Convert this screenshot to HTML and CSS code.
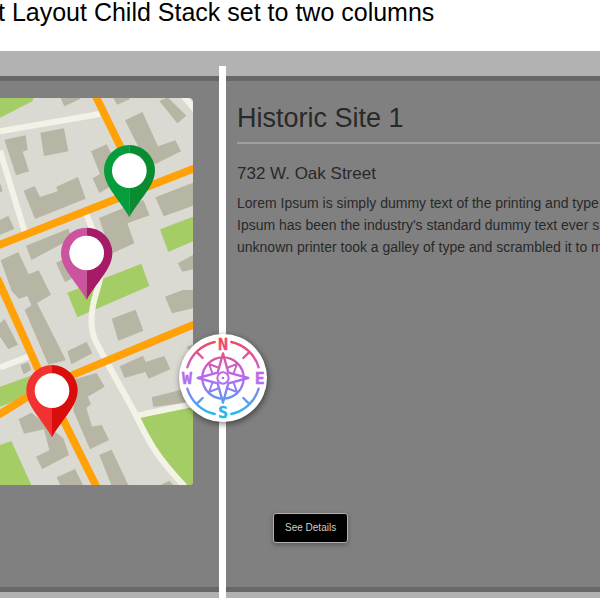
FILE: index.html
```html
<!DOCTYPE html>
<html lang="en">
<head>
<meta charset="utf-8">
<meta name="viewport" content="width=device-width, initial-scale=1">
<title>Layout Child Stack</title>
<link rel="stylesheet" href="styles.css">
</head>
<body>
<header class="page-header">
  <h1 class="page-title">t Layout Child Stack set to two columns</h1>
</header>
<main class="stage">
  <div class="stack">
    <div class="map-column">
      <svg class="map" viewBox="0 24 579 1161" role="img" aria-label="Street map with three pins">
        <rect y="24" width="579" height="1161" fill="#dadad2"/>
        <g fill="#a5cd65">
          <path d="M0 24H101L97 34L0 83Z"/>
          <path d="M480 418L579 380V454L505 486Z"/>
          <path d="M202 608L424 521L448 588L232 682Z"/>
          <path d="M0 890L90 858V915L0 950Z"/>
          <path d="M0 1065L34 1053L94 1185H0Z"/>
          <path d="M416 983L579 950V1185H556C490 1110 450 1070 416 983Z"/>
        </g>
        <g fill="#b7b5a3">
          <path d="M182 24H242L239 28L193 49Z"/>
          <path d="M340 24H390L386 29L351 44Z"/>
          <path d="M478 33L503 22L559 77L532 100Z"/>
          <path d="M375 91L427 66L474 169L526 151L543 184L465 223L425 190Z"/>
          <path d="M121 128L192 115L205 184L132 198Z"/>
          <path d="M13 149L77 136L83 180L68 185L87 244L48 256Z"/>
          <path d="M71 302L104 288L120 321L173 304L169 290L234 261L257 326L105 387Z"/>
          <path d="M273 184L320 163L338 198L330 290L298 309L278 265L300 252Z"/>
          <path d="M466 322L579 278V347L491 379Z"/>
          <path d="M297 384L430 330L449 376L382 400L403 460L333 491Z"/>
          <path d="M0 390L25 377L43 417L0 434Z"/>
          <path d="M0 280L8 302L0 308Z"/>
          <path d="M78 467L205 416L217 445L94 510Z"/>
          <path d="M2 511L55 486L86 553L116 541L153 614L111 639L198 811L145 824L74 660L94 646L82 618L57 626L35 603Z"/>
          <path d="M168 518L190 508L216 565L195 577Z"/>
          <path d="M533 520L579 495V538L547 545Z"/>
          <path d="M0 700L14 687L54 764L25 778L0 740Z"/>
          <path d="M335 686L407 659L430 722L355 752Z"/>
          <path d="M495 620L549 600H579V655L516 670Z"/>
          <path d="M202 784L260 755L277 790L214 823Z"/>
          <path d="M61 826L85 816L94 840L71 853Z"/>
          <path d="M359 829L429 797L437 816L493 798L511 838L446 866L436 846L374 864Z"/>
          <path d="M455 922L550 898L579 903V935L460 951Z"/>
          <path d="M560 770L579 764V790L570 788Z"/>
          <path d="M225 868L290 849L314 890L263 920L273 942L259 954L276 1010L305 1004L327 1050L270 1078L220 962Z"/>
          <path d="M56 988L94 968L190 1045L207 1095L127 1137L108 1100L148 1081L132 1018L72 1031Z"/>
          <path d="M298 1095L335 1079L385 1185H334Z"/>
          <path d="M170 1162L225 1137L249 1185H181Z"/>
          <path d="M481 1185L508 1172L520 1185Z"/>
        </g>
        <g fill="none" stroke="#f2f3e6" stroke-width="18">
          <path d="M0 124L300 72"/>
          <path d="M0 182L74 425"/>
          <path d="M550 18L590 65"/>
          <path d="M0 832L90 798"/>
          <path d="M258 370L296 465C313 540 299 575 288 610Q261 700 288 756Q334 842 398 956C448 1060 470 1100 554 1189"/>
          <path d="M410 977L579 942"/>
        </g>
        <g fill="none" stroke="#ffa107" stroke-width="23">
          <path d="M287 18L370 188"/>
          <path d="M-5 466L585 234"/>
          <path d="M-8 565L120 850L292 1195"/>
          <path d="M-5 975L110 904L225 852L585 702"/>
        </g>
        <g>
          <path fill="#079c3b" d="M388 165V382C360 330 312 290 312 241A76 76 0 0 1 388 165Z"/>
          <path fill="#098c31" d="M388 165V382C416 330 465 290 465 241A77 76 0 0 0 388 165Z"/>
          <circle cx="388" cy="242" r="52" fill="#fff"/>
        </g>
        <g>
          <path fill="#cb539f" d="M260 413V630C232 578 183 538 183 489A77 76 0 0 1 260 413Z"/>
          <path fill="#a71a68" d="M260 413V630C288 578 337 538 337 489A77 76 0 0 0 260 413Z"/>
          <circle cx="260" cy="489" r="52" fill="#fff"/>
        </g>
        <g>
          <path fill="#f13231" d="M156 825V1042C128 990 79 950 79 901A77 76 0 0 1 156 825Z"/>
          <path fill="#d90d0b" d="M156 825V1042C184 990 233 950 233 901A77 76 0 0 0 156 825Z"/>
          <circle cx="156" cy="902" r="52" fill="#fff"/>
        </g>
      </svg>
    </div>
    <section class="site">
      <h2 class="site-name">Historic Site 1</h2>
      <h3 class="site-address">732 W. Oak Street</h3>
      <p class="site-text">Lorem Ipsum is simply dummy text of the printing and type<br>Ipsum has been the industry's standard dummy text ever s<br>unknown printer took a galley of type and scrambled it to m</p>
      <button class="details" type="button">See Details</button>
    </section>
  </div>
  <div class="divider">
    <button class="handle" type="button" aria-label="Compass">
      <svg class="compass" viewBox="30 26 264 264">
        <defs>
          <linearGradient id="sky" gradientUnits="userSpaceOnUse" x1="0" y1="36" x2="0" y2="280">
            <stop offset="0" stop-color="#f8444f"/>
            <stop offset=".5" stop-color="#b969f2"/>
            <stop offset="1" stop-color="#10c2ec"/>
          </linearGradient>
        </defs>
        <g fill="none" stroke="url(#sky)" stroke-width="7" stroke-linecap="round" stroke-linejoin="round">
          <path d="M137 50A110 110 0 0 0 55 126M187 50A110 110 0 0 1 269 126M55 190A110 110 0 0 0 137 266M269 190A110 110 0 0 1 187 266"/>
          <path d="M84 81L101 98M240 81L223 98M84 235L101 218M240 235L223 218"/>
          <circle cx="162" cy="158" r="62"/>
          <circle cx="162" cy="158" r="17" stroke-width="6"/>
          <path d="M162 84L178 142L238 158L178 174L162 232L146 174L86 158L146 142Z"/>
          <path stroke-width="6" d="M151 128L120 116L131 146M173 128L204 116L193 146M151 188L120 200L131 170M173 188L204 200L193 170"/>
        </g>
        <circle cx="162" cy="158" r="4" fill="#b969f2"/>
        <g class="points" fill="url(#sky)" stroke="url(#sky)">
          <text x="162" y="74">N</text>
          <text x="54" y="175">W</text>
          <text x="272" y="175">E</text>
          <text x="162" y="278">S</text>
        </g>
      </svg>
    </button>
  </div>
</main>
</body>
</html>
```
FILE: styles.css
```css
* {
  box-sizing: border-box;
}

body {
  margin: 0;
  overflow-x: hidden;
  background: #fff;
  color: #000;
  font-family: "Liberation Sans", Arial, sans-serif;
}

.page-header {
  height: 51px;
  overflow: hidden;
}

.page-title {
  margin: 0 0 0 -2px;
  font-size: 25px;
  font-weight: 400;
  line-height: 24px;
  white-space: nowrap;
}

.stage {
  position: relative;
  padding: 25px 0 6px;
  background: #b2b2b2;
}

.stack {
  display: grid;
  grid-template-columns: 223fr 377fr;
  border-top: 5px solid #686868;
  border-bottom: 5px solid #686868;
  background: #808080;
}

.map-column {
  padding: 17px 30px 102px 0;
}

.map {
  display: block;
  width: 100%;
  border-radius: 0 4px 4px 0;
}

.site {
  min-width: 0;
  padding: 17px 0 44px 14px;
  overflow: hidden;
  display: flex;
  flex-direction: column;
  color: #292929;
}

.site-name {
  margin: 0;
  padding-bottom: 4px;
  border-bottom: 2px solid #a0a0a0;
  font-size: 27px;
  font-weight: 400;
  line-height: 40px;
}

.site-address {
  margin: 18px 0 6px;
  font-size: 17px;
  font-weight: 400;
  line-height: 24px;
}

.site-text {
  margin: 0;
  font-size: 14px;
  line-height: 22px;
  white-space: nowrap;
}

.details {
  align-self: flex-start;
  margin: auto 0 0 36px;
  padding: 0 11px;
  height: 30px;
  border: 1px solid #b2b2b2;
  border-radius: 3px;
  background: #000;
  color: #ccc;
  font: 10px/28px "Liberation Sans", Arial, sans-serif;
  box-shadow: 0 2px 5px rgba(0, 0, 0, 0.3);
}

.divider {
  position: absolute;
  top: 15px;
  bottom: 0;
  left: 36.5%;
  width: 7px;
  background: #fff;
}

.handle {
  position: absolute;
  top: 268px;
  left: -40px;
  width: 88px;
  height: 88px;
  padding: 0;
  border: 0;
  border-radius: 50%;
  background: #fff;
  box-shadow: 1px 2px 6px rgba(0, 0, 0, 0.5);
}

.compass {
  display: block;
  width: 100%;
}

.points {
  font-family: "DejaVu Sans Mono", monospace;
  font-size: 50px;
  font-weight: 700;
  text-anchor: middle;
  stroke-width: 1px;
}
```
